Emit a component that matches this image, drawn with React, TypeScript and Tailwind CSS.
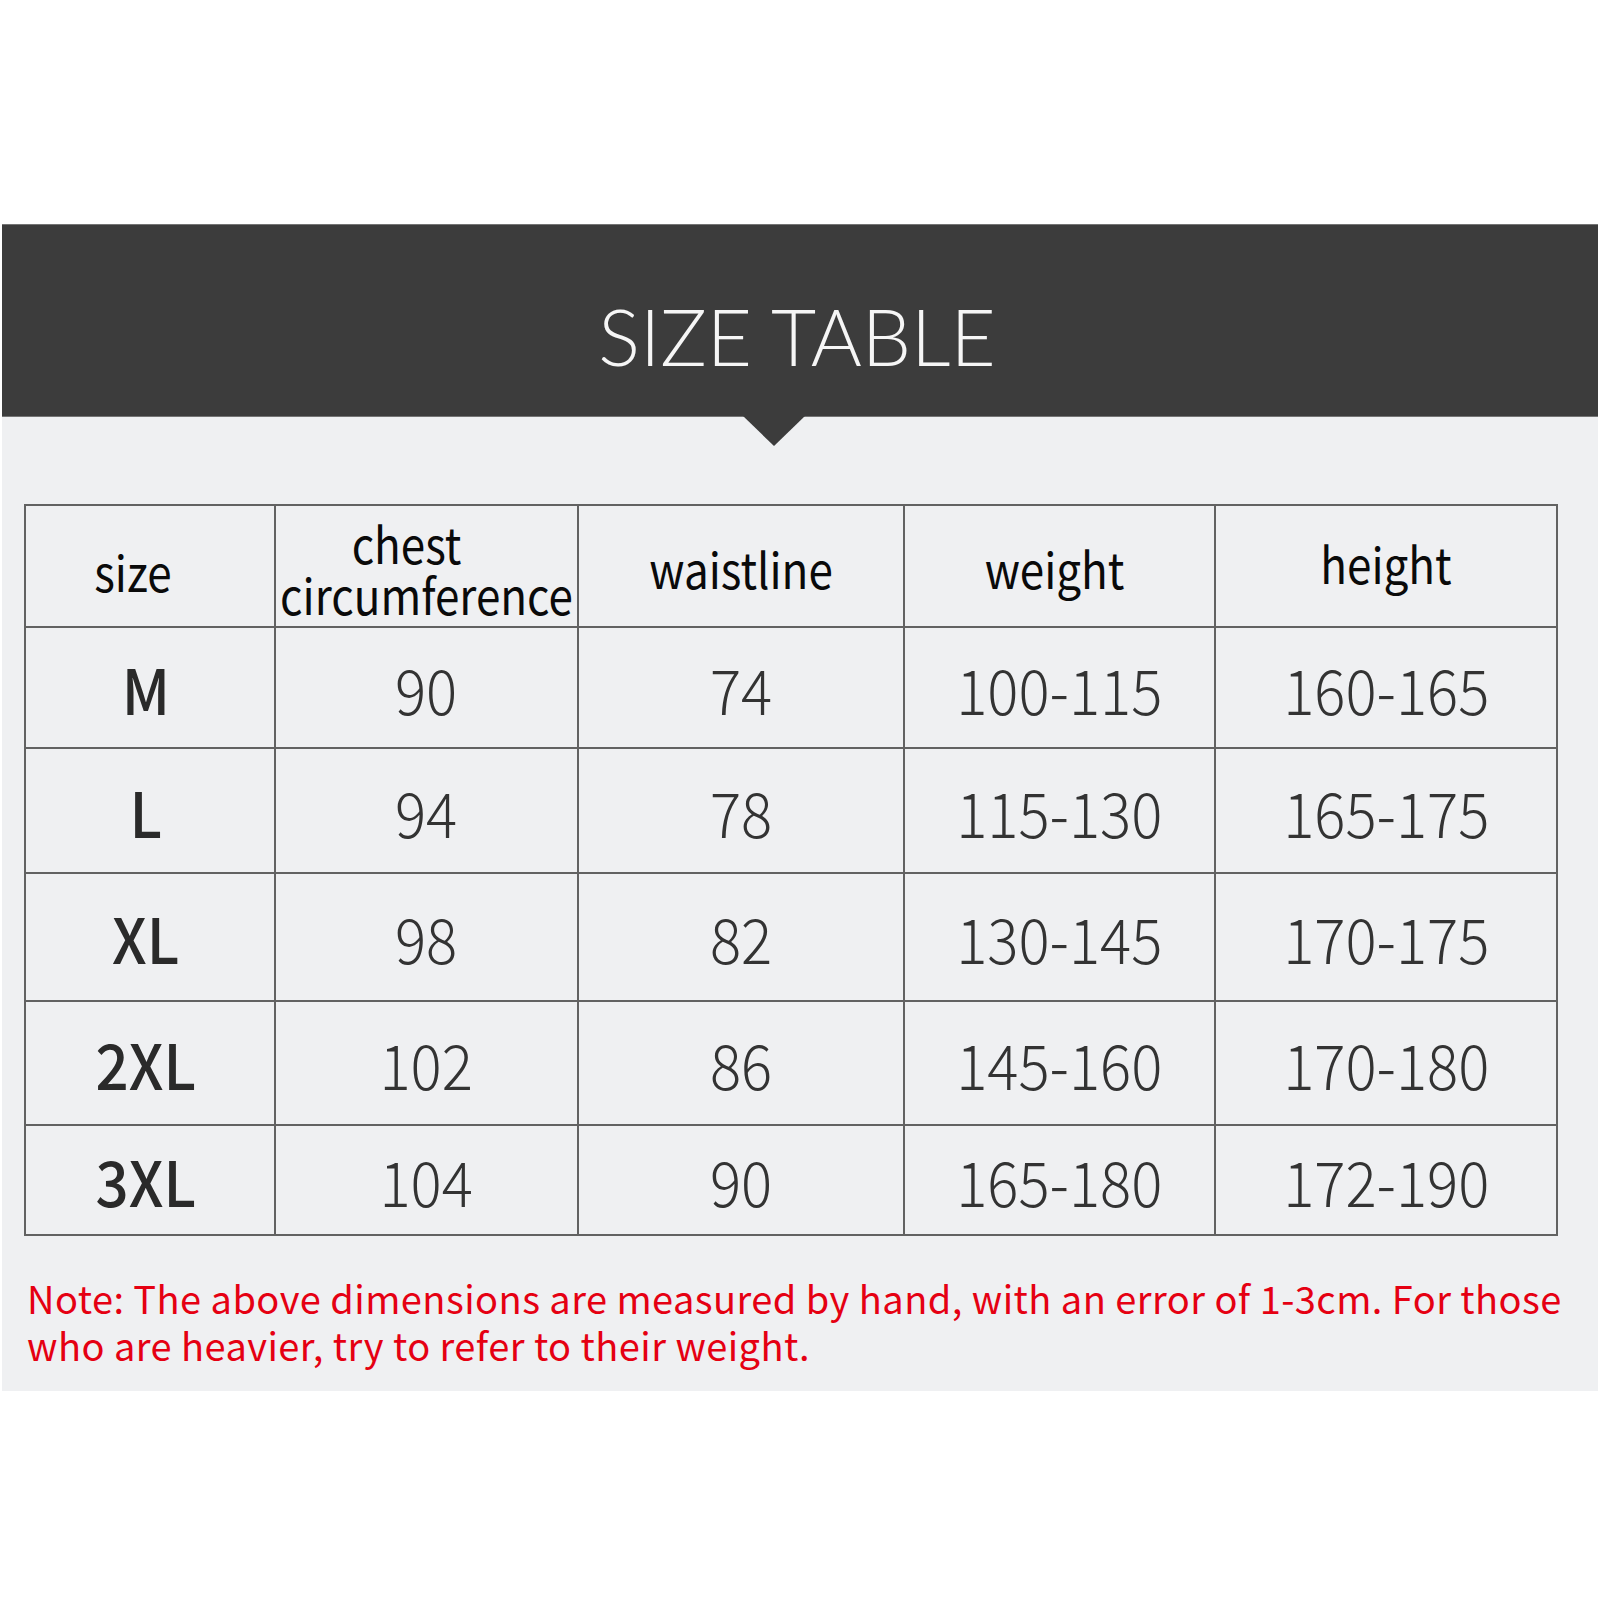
import React from "react";

const rows = [
  { size: "M", chest: "90", waist: "74", weight: "100-115", height: "160-165" },
  { size: "L", chest: "94", waist: "78", weight: "115-130", height: "165-175" },
  { size: "XL", chest: "98", waist: "82", weight: "130-145", height: "170-175" },
  { size: "2XL", chest: "102", waist: "86", weight: "145-160", height: "170-180" },
  { size: "3XL", chest: "104", waist: "90", weight: "165-180", height: "172-190" },
];

const cjk = "font-['Noto_Sans_CJK_SC','Noto_Sans',sans-serif]";

function HeadCell({ children, className = "" }: { children: React.ReactNode; className?: string }) {
  return (
    <div className={`flex items-center justify-center bg-[#eff0f2] pt-[4px] text-[44px] leading-[46px] text-[#0a0a0a] ${cjk} ${className}`}>
      <span className="scale-y-[1.12] text-center">{children}</span>
    </div>
  );
}

function Cell({ children, strong }: { children: React.ReactNode; strong?: boolean }) {
  return (
    <div
      className={`flex items-center justify-center bg-[#eff0f2] text-[60px] leading-none ${cjk} ${
        strong ? "pr-[8px] font-medium text-[#2a2a2a]" : "font-light text-[#333333]"
      }`}
    >
      <span className="scale-x-[0.97] scale-y-[1.04]">{children}</span>
    </div>
  );
}

export default function App() {
  return (
    <div className="h-[1600px] w-[1600px] bg-white pt-[224px]">
      {/* dark title band */}
      <div className="relative mx-[2px] flex h-[193px] items-center justify-center border-y border-[#747474] bg-[#3c3c3c] pt-[30px]">
        <h1 className="pr-[6px] font-['Lato','Open_Sans',sans-serif] text-[78px] font-light leading-none text-[#f6f6f6]">
          SIZE TABLE
        </h1>
        <svg
          className="absolute left-[741px] top-full"
          width="62"
          height="31"
          viewBox="0 0 62 31"
        >
          <polygon points="0,0 62,0 31,30" fill="#3c3c3c" />
        </svg>
      </div>

      {/* light panel */}
      <div className="mx-[2px] h-[974px] bg-[#eff0f2] pl-[22px] pt-[87px]">
        <div className="grid w-fit grid-cols-[248px_301px_324px_309px_340px] grid-rows-[120px_119px_123px_126px_122px_108px] gap-[2px] bg-[#626262] p-[2px]">
          <HeadCell className="pr-[34px] pt-[10px]">size</HeadCell>
          <HeadCell>
            <span className="block pr-[40px]">chest</span>
            circumference
          </HeadCell>
          <HeadCell>waistline</HeadCell>
          <HeadCell className="pr-[10px]">weight</HeadCell>
          <HeadCell className="pb-[10px]">height</HeadCell>
          {rows.map((r) => (
            <React.Fragment key={r.size}>
              <Cell strong>{r.size}</Cell>
              <Cell>{r.chest}</Cell>
              <Cell>{r.waist}</Cell>
              <Cell>{r.weight}</Cell>
              <Cell>{r.height}</Cell>
            </React.Fragment>
          ))}
        </div>

        <p className={`mt-[38px] pl-[3px] text-[38px] font-normal leading-[47px] tracking-[0.45px] text-[#e50012] ${cjk}`}>
          Note: The above dimensions are measured by hand, with an error of 1-3cm. For those
          <br />
          who are heavier, try to refer to their weight.
        </p>
      </div>
    </div>
  );
}
